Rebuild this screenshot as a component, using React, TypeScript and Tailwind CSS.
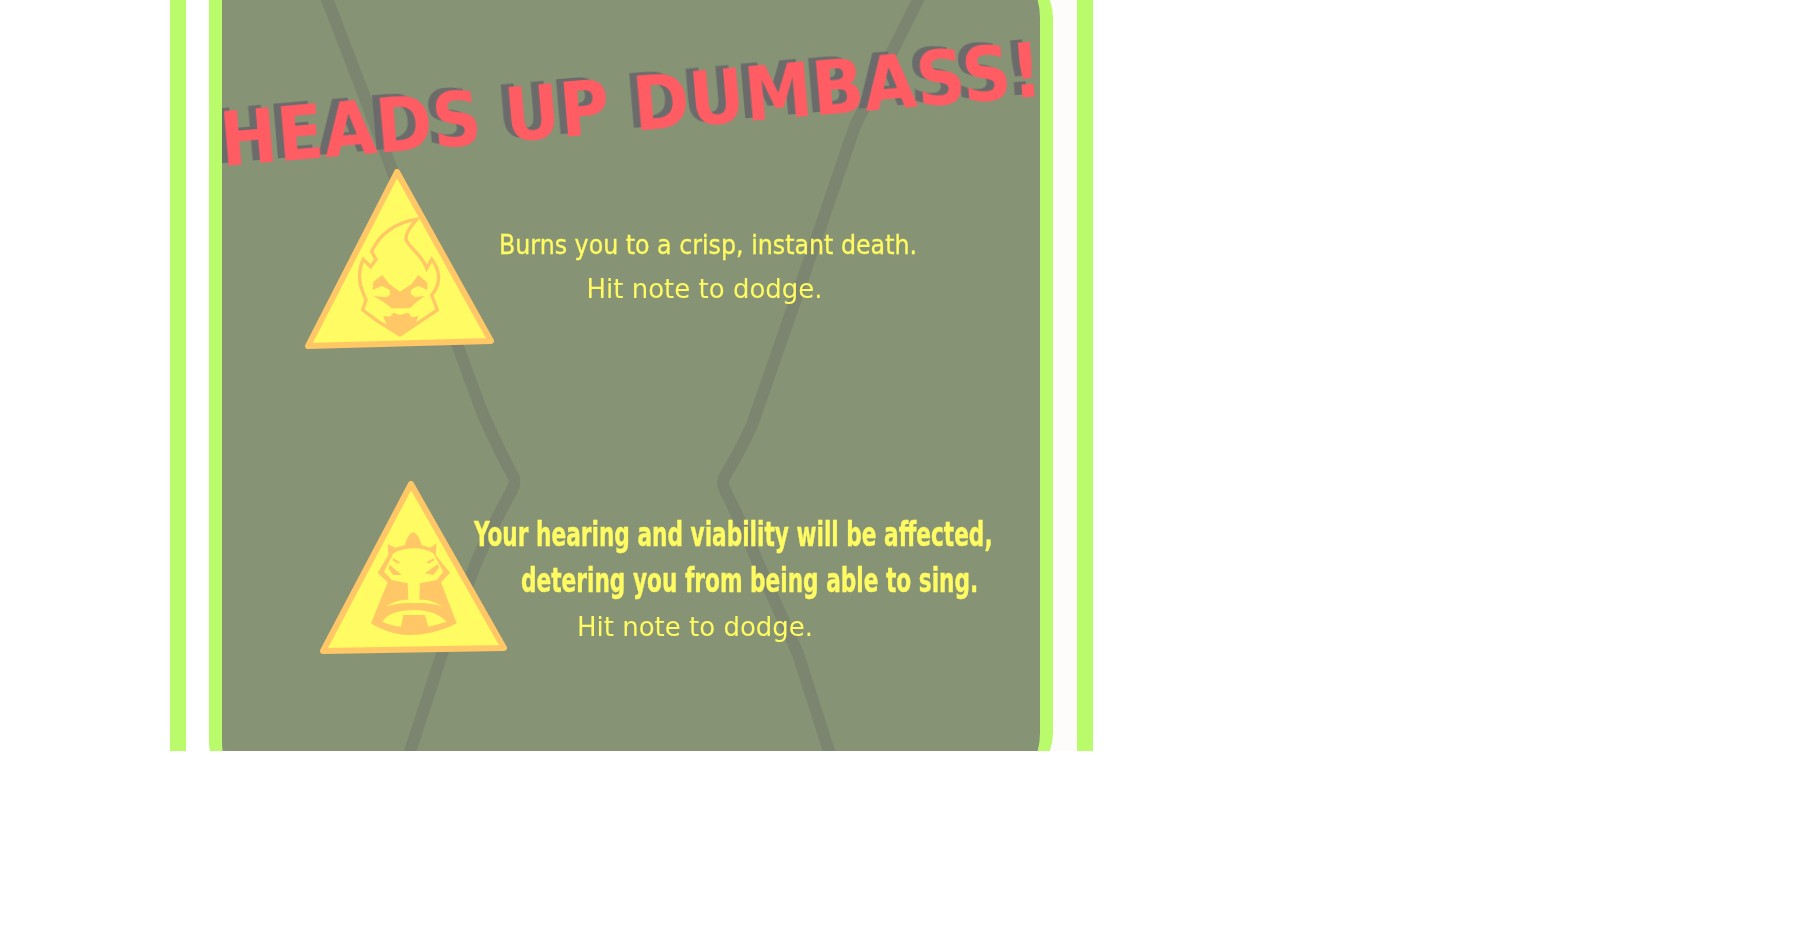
const crack = "#7c8570";

function FireSign() {
  return (
    <svg viewBox="300 163 200 190" className="w-[200px] h-[190px] shrink-0 blur-[0.5px]">
      <path d="M397 172 L491 341 L308 346 Z" fill="#fffb62" stroke="#ffc766" strokeWidth="6" strokeLinejoin="round" />
      <g transform="translate(350 210) scale(0.3333)" fill="#ffc766">
        <path
          d="M200 28 C140 35 85 75 65 125 L78 148 L62 170 L40 148 C25 180 25 215 40 250 L48 270 L38 300 L85 335 L150 375 L210 335 L262 300 L245 255 C275 220 270 180 245 148 L230 175 C215 130 170 110 168 85 C168 65 185 45 200 28 Z"
          fill="none"
          stroke="#ffc766"
          strokeWidth="10"
        />
        <path d="M68 240 L70 215 L97 195 L118 222 L150 245 L185 222 L205 195 L232 218 L232 240 L205 228 L190 235 L155 262 L110 235 L95 228 Z" />
        <path d="M70 258 L110 262 L125 250 L150 270 L180 250 L195 262 L225 258 L200 275 L180 295 L155 288 L125 295 L100 275 Z" />
        <path d="M118 225 L150 248 L185 225 L175 295 L125 295 Z" />
        <path d="M100 318 L120 320 L130 308 L150 315 L175 308 L185 322 L205 318 L195 345 L150 378 L110 345 Z" />
      </g>
    </svg>
  );
}

function RockSign() {
  return (
    <svg viewBox="313 473 200 187" className="w-[200px] h-[187px] shrink-0 blur-[0.5px]">
      <path d="M411 484 L504 648 L323 651 Z" fill="#fffb62" stroke="#ffc766" strokeWidth="6" strokeLinejoin="round" />
      <g transform="translate(365 525) scale(0.3333)">
        <path
          fill="#ffc766"
          d="M38 143 L70 90 L68 58 L92 68 L120 60 C125 40 135 22 145 22 C158 25 165 45 170 60 L195 68 L215 55 L212 90 L255 143 L228 172 L275 295 C230 320 170 332 130 330 C90 330 50 315 18 295 L68 172 Z"
        />
        <path
          fill="#fffb62"
          d="M85 85 C120 65 175 65 205 85 L235 140 L215 165 L165 175 L163 225 L130 225 L128 175 L80 165 L57 140 Z"
        />
        <path fill="#ffc766" d="M75 120 L110 150 L85 150 L70 130 Z M218 118 L180 145 L205 150 L222 128 Z M85 100 L105 112 L100 116 L82 106 Z M205 100 L185 112 L190 116 L208 106 Z" />
        <path fill="#fffb62" d="M62 245 C90 225 120 222 148 225 C175 222 205 225 232 245 C205 235 175 232 148 235 C120 232 90 235 62 245 Z" />
        <path fill="#fffb62" d="M52 290 C70 265 100 255 150 255 C195 255 225 270 245 290 C225 297 205 302 190 305 L180 270 L115 270 L108 305 C85 302 70 298 52 290 Z" />
      </g>
    </svg>
  );
}

export default function App() {
  return (
    <div className="w-full h-[950px] bg-white font-['DejaVu_Sans',sans-serif]">
      <div className="h-[751px] overflow-hidden flex pl-[170px]">
        <div className="w-4 bg-[#b9fb6b]" />
        <div className="w-[23px] bg-white" />
        <div className="relative w-[844px] h-[823px] -mt-[36px] shrink-0 overflow-hidden border-x-[13px] border-[#b9fb6b] rounded-r-[54px] rounded-bl-[45px] bg-[#869374] pt-[93px]">
          <svg viewBox="222 -36 818 823" className="absolute inset-0 w-full h-full">
            <g fill="none" stroke={crack} strokeWidth="12" strokeLinejoin="round" strokeLinecap="round">
              <path d="M322 -14 L367 103 L453 333 L482 412 Q498 448 513 476 Q516 482 512 490 Q490 530 476 563 L442 654 L404 770" />
              <path d="M925 -14 L855 126 L792 310 L752 425 Q738 455 725 476 Q721 482 725 490 Q745 530 758 563 L798 654 L835 770" />
            </g>
          </svg>

          <h1 className="relative flex justify-center h-[96px] w-[818px] -rotate-[4.9deg] scale-x-[.92] text-[74px] leading-[96px] font-bold whitespace-nowrap text-[#ff5c64] [text-shadow:-8px_-3px_0_#6b6b6b] blur-[0.4px]">
            HEADS UP DUMBASS!
          </h1>

          <div className="relative flex mt-[10px] ml-[78px]">
            <FireSign />
            <div className="-ml-[1px] w-[418px] pt-[60px] text-center text-[#fffb62] whitespace-nowrap">
              <p className="text-[26.4px] leading-[44px] [font-stretch:condensed] [-webkit-text-stroke:0.3px_#fffb62] blur-[0.3px]">Burns you to a crisp, instant death.</p>
              <p className="-ml-[7px] text-[26px] leading-[44px] blur-[0.3px]">Hit note to dodge.</p>
            </div>
          </div>

          <div className="relative flex mt-[120px] ml-[91px]">
            <RockSign />
            <div className="-ml-[39px] w-[519px] pt-[39px] text-[#fffb62] whitespace-nowrap">
              <p className="w-fit origin-left scale-x-[.73] text-[33px] leading-[46px] font-bold [font-stretch:condensed] [-webkit-text-stroke:0.4px_#fffb62] blur-[0.3px]">Your hearing and viability will be affected,</p>
              <p className="ml-[47px] w-fit origin-left scale-x-[.73] text-[33px] leading-[46px] font-bold [font-stretch:condensed] [-webkit-text-stroke:0.4px_#fffb62] blur-[0.3px]">detering you from being able to sing.</p>
              <p className="ml-[103px] text-[26px] leading-[46px] blur-[0.3px]">Hit note to dodge.</p>
            </div>
          </div>
        </div>
        <div className="w-[24px] bg-[#fdfcfb]" />
        <div className="w-4 bg-[#b9fb6b]" />
      </div>
    </div>
  );
}
